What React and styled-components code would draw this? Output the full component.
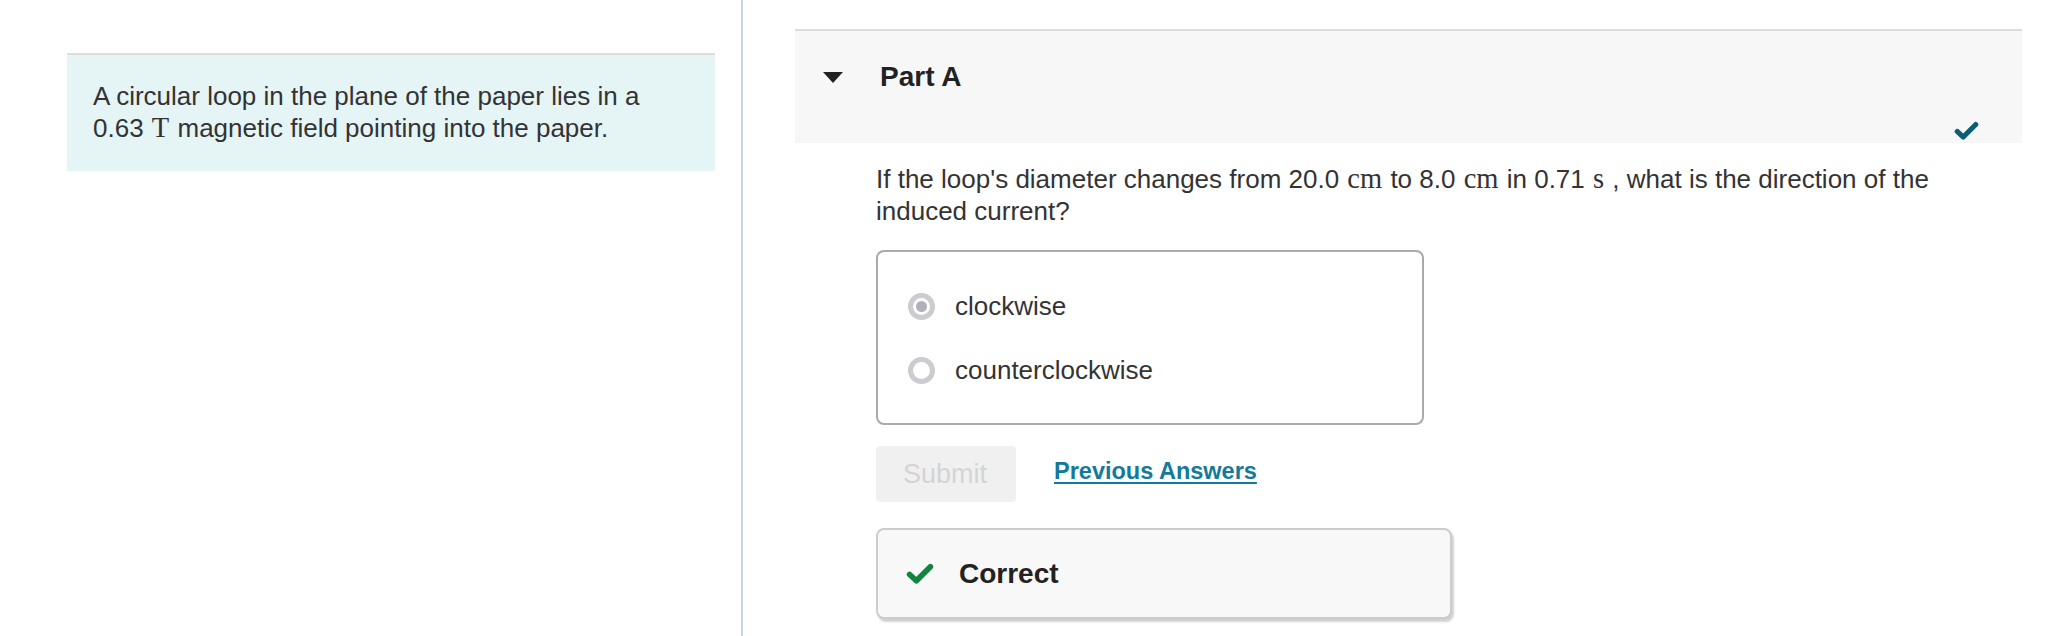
import React from 'react';
import styled, { createGlobalStyle } from 'styled-components';

const GlobalStyle = createGlobalStyle`
  html, body {
    margin: 0;
    padding: 0;
    background: #ffffff;
  }
  body {
    font-family: "Liberation Sans", Arial, Helvetica, sans-serif;
    color: #333333;
  }
`;

const Page = styled.div`
  display: flex;
  width: 2064px;
  height: 636px;
  overflow: hidden;
`;

const IntroColumn = styled.section`
  width: 741px;
  flex-shrink: 0;
  box-sizing: border-box;
  padding: 53px 26px 0 67px;
`;

const IntroBox = styled.div`
  background: #e5f5f5;
  border-top: 2px solid #dddddd;
  padding: 25px 26px 27px 26px;
  font-size: 26px;
  line-height: 32px;
`;

const PartColumn = styled.section`
  flex: 1;
  box-sizing: border-box;
  border-left: 2px solid #c6d4e2;
  padding: 29px 42px 0 52px;
`;

const PartHeader = styled.div`
  display: flex;
  flex-direction: column;
  box-sizing: border-box;
  height: 114px;
  background: #f7f7f7;
  border-top: 2px solid #dddddd;
`;

const TitleRow = styled.div`
  display: flex;
  align-items: center;
  gap: 37px;
  padding: 30px 0 0 28px;
`;

const Caret = styled.span`
  width: 0;
  height: 0;
  border-left: 10.5px solid transparent;
  border-right: 10.5px solid transparent;
  border-top: 11px solid #222222;
`;

const PartTitle = styled.h2`
  margin: 0;
  font-size: 28px;
  line-height: 32px;
  font-weight: 700;
  color: #222222;
`;

const StatusMark = styled.div`
  align-self: flex-end;
  margin: auto 43px 2px 0;
  display: flex;
`;

const PartBody = styled.div`
  padding-left: 81px;
`;

const Question = styled.p`
  margin: 20px 0 0;
  max-width: 1095px;
  font-size: 26px;
  line-height: 32px;
`;

const Math = styled.span`
  font-family: "Liberation Serif", "Times New Roman", serif;
  font-size: 28.5px;
  line-height: 1;
  margin: 0 1px;
`;

const ChoiceBox = styled.div`
  margin-top: 23px;
  width: 548px;
  box-sizing: border-box;
  border: 2px solid #aaaaaa;
  border-radius: 8px;
  padding: 38px 30px 37px;
  display: flex;
  flex-direction: column;
  gap: 32px;
`;

const Choice = styled.label`
  display: flex;
  align-items: center;
  gap: 20px;
  font-size: 26px;
  line-height: 32px;
  color: #333333;
`;

const Radio = styled.span`
  position: relative;
  width: 27px;
  height: 27px;
  box-sizing: border-box;
  border-radius: 50%;
  border: 5px solid #cbcbd0;
  background: #ffffff;

  &::after {
    content: '';
    position: absolute;
    left: 50%;
    top: 50%;
    width: 11px;
    height: 11px;
    margin: -5.5px 0 0 -5.5px;
    border-radius: 50%;
    background: ${(p) => (p.$checked ? '#b0b0ba' : 'transparent')};
  }
`;

const ActionRow = styled.div`
  display: flex;
  align-items: center;
  gap: 38px;
  margin-top: 21px;
`;

const SubmitButton = styled.button`
  width: 140px;
  height: 56px;
  box-sizing: border-box;
  border: none;
  border-radius: 4px;
  background: #f0f0f0;
  color: #d4d4d4;
  font-family: inherit;
  font-size: 27px;
  text-align: left;
  padding: 0 0 0 27px;
`;

const PreviousLink = styled.a`
  font-size: 23.5px;
  font-weight: 700;
  color: #147a9b;
  text-decoration: underline;
  text-underline-offset: 3px;
  margin-top: -6px;
`;

const FeedbackBox = styled.div`
  margin-top: 26px;
  width: 576px;
  height: 91px;
  box-sizing: border-box;
  display: flex;
  align-items: center;
  gap: 25px;
  padding-left: 28px;
  background: #f8f8f8;
  border: 2px solid #cccccc;
  border-radius: 8px;
  box-shadow: 2px 3px 2px rgba(0, 0, 0, 0.18);
`;

const FeedbackText = styled.span`
  font-size: 28px;
  font-weight: 700;
  color: #222222;
`;

const CheckIcon = ({ color, width, height }) => (
  <svg width={width} height={height} viewBox="0 0 27 21" fill="none">
    <polyline
      points="3.5,11 10,17 23.5,3.5"
      stroke={color}
      strokeWidth="5.5"
      strokeLinecap="round"
      strokeLinejoin="round"
    />
  </svg>
);

const App = () => {
  return (
    <Page>
      <GlobalStyle />
      <IntroColumn>
        <IntroBox>
          A circular loop in the plane of the paper lies in a 0.63 <Math>T</Math> magnetic
          field pointing into the paper.
        </IntroBox>
      </IntroColumn>
      <PartColumn>
        <PartHeader>
          <TitleRow>
            <Caret />
            <PartTitle>Part A</PartTitle>
          </TitleRow>
          <StatusMark>
            <CheckIcon color="#0b5e73" width={25} height={20} />
          </StatusMark>
        </PartHeader>
        <PartBody>
          <Question>
            If the loop's diameter changes from 20.0 <Math>cm</Math> to 8.0 <Math>cm</Math> in
            0.71 <Math>s</Math> , what is the direction of the induced current?
          </Question>
          <ChoiceBox>
            <Choice>
              <Radio $checked />
              clockwise
            </Choice>
            <Choice>
              <Radio />
              counterclockwise
            </Choice>
          </ChoiceBox>
          <ActionRow>
            <SubmitButton disabled>Submit</SubmitButton>
            <PreviousLink href="#">Previous Answers</PreviousLink>
          </ActionRow>
          <FeedbackBox>
            <CheckIcon color="#13843f" width={28} height={22} />
            <FeedbackText>Correct</FeedbackText>
          </FeedbackBox>
        </PartBody>
      </PartColumn>
    </Page>
  );
};

export default App;
